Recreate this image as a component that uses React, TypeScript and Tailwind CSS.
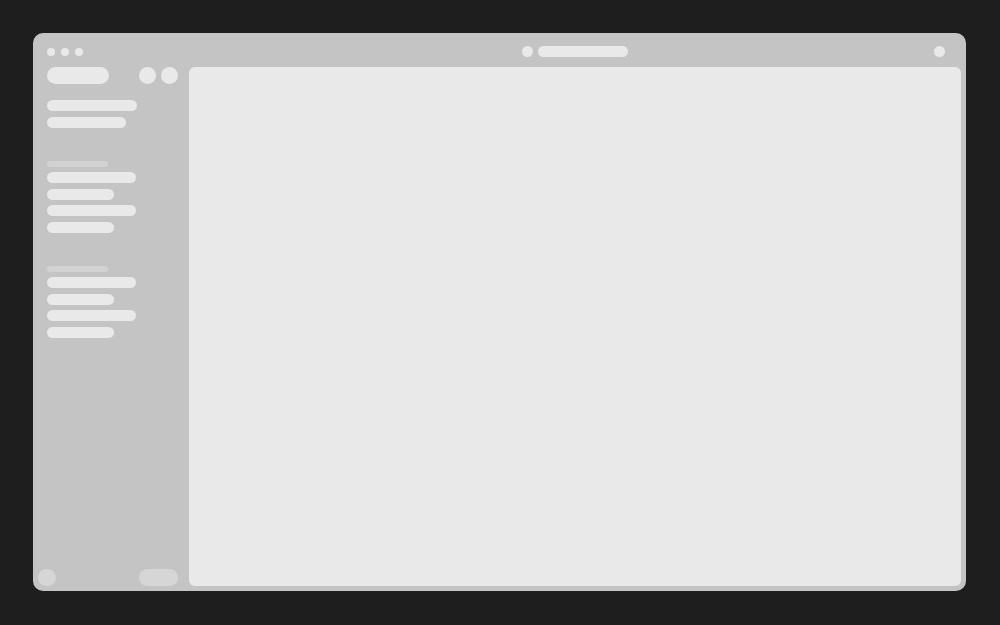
export default function App() {
  const section = (key: string) => (
    <div key={key} className="flex flex-col">
      <div className="h-[6px] w-[61px] rounded-full bg-[#d2d2d2]" />
      <div className="mt-[5px] flex flex-col gap-[5.7px]">
        <div className="h-[11px] w-[89px] rounded-full bg-[#e9e9e9]" />
        <div className="h-[11px] w-[67px] rounded-full bg-[#e9e9e9]" />
        <div className="h-[11px] w-[89px] rounded-full bg-[#e9e9e9]" />
        <div className="h-[11px] w-[67px] rounded-full bg-[#e9e9e9]" />
      </div>
    </div>
  );

  return (
    <div className="h-[625px] w-[1000px] bg-[#1e1e1e] pl-[33px] pt-[33px]">
      <div className="flex h-[558px] w-[933px] flex-col rounded-[10px] bg-[#c4c4c4]">
        {/* Title bar */}
        <div className="flex h-[34px] items-center pt-[3px]">
          <div className="flex w-[156px] gap-[6px] pl-[14px]">
            <div className="h-[8px] w-[8px] rounded-full bg-[#e9e9e9]" />
            <div className="h-[8px] w-[8px] rounded-full bg-[#e9e9e9]" />
            <div className="h-[8px] w-[8px] rounded-full bg-[#e9e9e9]" />
          </div>
          <div className="flex flex-1 items-center justify-center gap-[5px] pl-[32px]">
            <div className="h-[11px] w-[11px] rounded-full bg-[#e9e9e9]" />
            <div className="h-[11px] w-[90px] rounded-full bg-[#e9e9e9]" />
          </div>
          <div className="w-[37px] pl-[5px]">
            <div className="h-[11px] w-[11px] rounded-full bg-[#e9e9e9]" />
          </div>
        </div>

        {/* Body */}
        <div className="flex flex-1 pb-[5px] pr-[5px]">
          <div className="flex w-[156px] flex-col">
            <div className="flex flex-1 flex-col pl-[14px]">
              <div className="flex items-center justify-between pr-[11px]">
                <div className="h-[17px] w-[62px] rounded-full bg-[#e9e9e9]" />
                <div className="flex gap-[5px]">
                  <div className="h-[17px] w-[17px] rounded-full bg-[#e9e9e9]" />
                  <div className="h-[17px] w-[17px] rounded-full bg-[#e9e9e9]" />
                </div>
              </div>
              <div className="mt-[16px] flex flex-col gap-[6px]">
                <div className="h-[11px] w-[90px] rounded-full bg-[#e9e9e9]" />
                <div className="h-[11px] w-[79px] rounded-full bg-[#e9e9e9]" />
              </div>
              <div className="mt-[33px] flex flex-col gap-[33px]">
                {section("a")}
                {section("b")}
              </div>
            </div>
            <div className="flex items-center justify-between pl-[5px] pr-[11px]">
              <div className="h-[17px] w-[18px] rounded-full bg-[#d6d6d6]" />
              <div className="h-[17px] w-[39px] rounded-full bg-[#d6d6d6]" />
            </div>
          </div>
          <div className="flex-1 rounded-[6px] bg-[#e9e9e9]" />
        </div>
      </div>
    </div>
  );
}
